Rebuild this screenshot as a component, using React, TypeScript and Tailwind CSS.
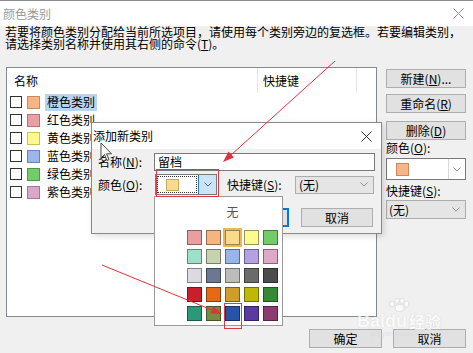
const CloseIcon = ({ className }: { className?: string }) => (
  <svg className={className} viewBox="0 0 12 12" fill="none" stroke="currentColor" strokeWidth={1}>
    <path d="M0.5 0.5 L11.5 11.5 M11.5 0.5 L0.5 11.5" />
  </svg>
);

const Chevron = ({ className }: { className?: string }) => (
  <svg className={className} viewBox="0 0 10 6" fill="none" stroke="currentColor" strokeWidth={1}>
    <path d="M0.5 0.5 L5 5 L9.5 0.5" />
  </svg>
);

const categories = [
  { name: "橙色类别", color: "#f6b487", border: "#c98a5e" },
  { name: "红色类别", color: "#e9a0a5", border: "#b86f76" },
  { name: "黄色类别", color: "#fdf98f", border: "#c9c25c" },
  { name: "蓝色类别", color: "#9cb6e8", border: "#6a82b8" },
  { name: "绿色类别", color: "#74cc6a", border: "#4c9a44" },
  { name: "紫色类别", color: "#dba7c6", border: "#a87693" },
];

const swatches = [
  ["#e99ea2", "#f5b482", "#f9dc8b", "#fdfa8e", "#73cc69"],
  ["#9edfc8", "#c6d3ae", "#99b4e8", "#b5a0e3", "#dea8c6"],
  ["#dadbe0", "#6a7891", "#bcbcbc", "#6b6b6b", "#4c4c4c"],
  ["#c8202a", "#e36a18", "#cf9d2c", "#bfb80a", "#348a34"],
  ["#2c9878", "#7a8a40", "#2555a8", "#5a3aa0", "#8c3c6e"],
];

const Button = ({ label, className }: { label: React.ReactNode; className?: string }) => (
  <div
    className={`h-[19px] flex items-center justify-center bg-[#e1e1e1] border border-[#adadad] text-[12px] leading-[14px] ${className ?? ""}`}
  >
    {label}
  </div>
);

export default function App() {
  return (
    <div className="relative w-[473px] h-[353px] overflow-hidden bg-[#f0f0f0] text-black text-[12px] leading-[14px] font-['Noto_Sans_CJK_SC','Liberation_Sans',sans-serif]">
      {/* title bar */}
      <div className="h-[26px] bg-white border-t border-[#8e8e8e] flex items-center justify-between pl-[3px] pr-[9px]">
        <span className="text-[#9a9a9a]">颜色类别</span>
        <CloseIcon className="w-[11px] h-[11px] text-[#8a8a8a]" />
      </div>

      {/* description */}
      <div className="h-[41px] pl-[5px] pt-[0px] leading-[12px] whitespace-nowrap">
        <p>若要将颜色类别分配给当前所选项目，请使用每个类别旁边的复选框。若要编辑类别，</p>
        <p>
          请选择类别名称并使用其右侧的命令(<span className="underline">T</span>)。
        </p>
      </div>

      <div className="flex pl-[6px]">
        {/* category list */}
        <div className="w-[371px] h-[250px] bg-white border border-[#828790]">
          <div className="h-[25px] flex">
            <div className="w-[251px] flex items-center pl-[7px] border-r border-[#e5e5e5]">名称</div>
            <div className="w-[99px] flex items-center pl-[5px] border-r border-[#e5e5e5]">快捷键</div>
          </div>
          {categories.map((c, i) => (
            <div key={c.name} className="h-[18px] flex items-center pl-[3px]">
              <div className="w-[12px] h-[12px] border border-[#333] bg-white" />
              <div
                className="ml-[5px] w-[13px] h-[13px] border"
                style={{ backgroundColor: c.color, borderColor: c.border }}
              />
              <div className={`ml-[5px] px-[2px] h-[17px] flex items-center ${i === 0 ? "bg-[#b9d4ef]" : ""}`}>
                {c.name}
              </div>
            </div>
          ))}
        </div>

        {/* right column */}
        <div className="ml-[9px] w-[80px] flex flex-col">
          <Button label={<span>新建(<span className="underline">N</span>)...</span>} className="mt-[2px]" />
          <Button label={<span>重命名(<span className="underline">R</span>)</span>} className="mt-[6px]" />
          <Button label={<span>删除(<span className="underline">D</span>)</span>} className="mt-[8px]" />
          <div className="mt-[1px]">
            颜色(<span className="underline">O</span>):
          </div>
          <div className="mt-[3px] h-[22px] flex bg-white border border-[#7a7a7a]">
            <div className="flex-1 flex items-center pl-[9px]">
              <div className="w-[13px] h-[13px] bg-[#f6b487] border border-[#c98a5e]" />
            </div>
            <div className="w-[17px] flex items-center justify-center border-l border-[#d9d9d9]">
              <Chevron className="w-[8px] h-[5px] text-[#777]" />
            </div>
          </div>
          <div className="mt-[4px]">
            快捷键(<span className="underline">S</span>):
          </div>
          <div className="mt-[2px] h-[19px] flex items-center justify-between bg-[#e5e5e5] border border-[#acacac] pl-[2px] pr-[5px]">
            <span>(无)</span>
            <Chevron className="w-[8px] h-[5px] text-[#777]" />
          </div>
        </div>
      </div>

      {/* bottom buttons */}
      <div className="mt-[12px] flex justify-end gap-[11px] pr-[7px]">
        <Button label="确定" className="w-[73px]" />
        <Button label="取消" className="w-[73px]" />
      </div>

      {/* watermark */}
      <div className="absolute left-[357px] top-[298px] flex flex-col items-center pointer-events-none opacity-70">
        <svg className="w-[26px] h-[14px]" viewBox="0 0 26 14" fill="white" stroke="#d0d0d0" strokeWidth={0.8}>
          <ellipse cx="6" cy="6" rx="2.5" ry="3" />
          <ellipse cx="11" cy="2.8" rx="2.3" ry="2.6" />
          <ellipse cx="16" cy="2.8" rx="2.3" ry="2.6" />
          <ellipse cx="20.5" cy="6" rx="2.5" ry="3" />
          <ellipse cx="13.5" cy="10" rx="4.5" ry="3.5" />
        </svg>
        <div className="flex items-end text-[18px] leading-[18px] font-bold text-white [text-shadow:0_0_1px_#b8b8b8]">
          <span className="font-['Liberation_Sans',sans-serif]">Baidu</span>
          <span className="ml-[2px] text-[16px]">经验</span>
        </div>
        <div className="text-[7px] leading-[8px] text-[#dcdcdc] font-['Liberation_Sans',sans-serif]">jingyan.baidu.com</div>
      </div>

      {/* add new category dialog */}
      <div className="absolute left-[91px] top-[122px] w-[291px] h-[112px] bg-[#f0f0f0] border border-[#8a8a8a] shadow-[2px_2px_6px_rgba(0,0,0,0.15)]">
        <div className="h-[26px] bg-white flex items-center justify-between pl-[1px] pr-[9px]">
          <span>添加新类别</span>
          <CloseIcon className="w-[11px] h-[11px] text-[#222]" />
        </div>
        <div className="mt-[4px] flex items-center pl-[6px]">
          <span className="w-[56px]">
            名称(<span className="underline">N</span>):
          </span>
          <div className="w-[221px] h-[18px] bg-white border border-[#7a7a7a] flex items-center pl-[3px]">留档</div>
        </div>
        <div className="mt-[3px] flex items-center pl-[6px]">
          <span className="w-[57px]">
            颜色(<span className="underline">O</span>):
          </span>
          <div className="w-[62px] h-[21px] flex bg-white border border-[#7a7a7a]">
            <div className="flex-1 m-[1px] border border-dotted border-[#333] flex items-center pl-[8px]">
              <div className="w-[13px] h-[12px] bg-[#f9dc8b] border border-[#c9a85a]" />
            </div>
            <div className="w-[18px] flex items-center justify-center bg-[#cce4f7] border-l border-[#2a78c8]">
              <Chevron className="w-[8px] h-[5px] text-[#444]" />
            </div>
          </div>
          <span className="ml-[10px] w-[68px]">
            快捷键(<span className="underline">S</span>):
          </span>
          <div className="w-[79px] h-[18px] flex items-center justify-between bg-[#e5e5e5] border border-[#acacac] pl-[3px] pr-[5px]">
            <span>(无)</span>
            <Chevron className="w-[8px] h-[5px] text-[#777]" />
          </div>
        </div>
        <div className="mt-[13px] flex justify-end gap-[12px] pr-[8px]">
          <div className="w-[72px] h-[19px] flex items-center justify-center bg-[#e1e1e1] border-2 border-[#0078d7]">确定</div>
          <Button label="取消" className="w-[72px]" />
        </div>
      </div>

      {/* colour dropdown */}
      <div className="absolute left-[154px] top-[196px] w-[129px] h-[130px] bg-white border border-[#9a9a9a] pl-[32px] pt-[8px]">
        <div className="w-[91px] text-center text-[#555]">无</div>
        <div className="mt-[11px] grid grid-cols-5 gap-[4px] w-[91px]">
          {swatches.flat().map((c, i) => (
            <div
              key={i}
              className={`w-[15px] h-[15px] border border-black/40 ${i === 2 ? "ring-2 ring-[#edb55a]" : ""}`}
              style={{ backgroundColor: c }}
            />
          ))}
        </div>
      </div>

      {/* annotations */}
      <div className="absolute left-[156px] top-[169px] w-[63px] h-[28px] border border-[#d63c44]" />
      <div className="absolute left-[224px] top-[303px] w-[18px] h-[26px] border border-[#d63c44]" />

      <svg className="absolute left-0 top-0 w-[473px] h-[353px] pointer-events-none" viewBox="0 0 473 353">
        <line x1="335" y1="61" x2="231" y2="155" stroke="#e0323c" strokeWidth={1} />
        <polygon points="223,162 233.9,157.6 228.5,151.6" fill="#e0323c" />
        <line x1="102" y1="265" x2="212" y2="310" stroke="#e0323c" strokeWidth={1} />
        <polygon points="222,314 210.3,313.5 213.3,306.1" fill="#e0323c" />
      </svg>

      {/* mouse cursor */}
      <svg className="absolute left-[100px] top-[142px] w-[13px] h-[20px] pointer-events-none" viewBox="0 0 13 20">
        <path d="M1 1 L1 16 L4.5 12.5 L7 18.5 L9 17.6 L6.6 11.8 L11.5 11.8 Z" fill="white" stroke="#333" strokeWidth={0.9} strokeLinejoin="round" />
      </svg>
    </div>
  );
}
